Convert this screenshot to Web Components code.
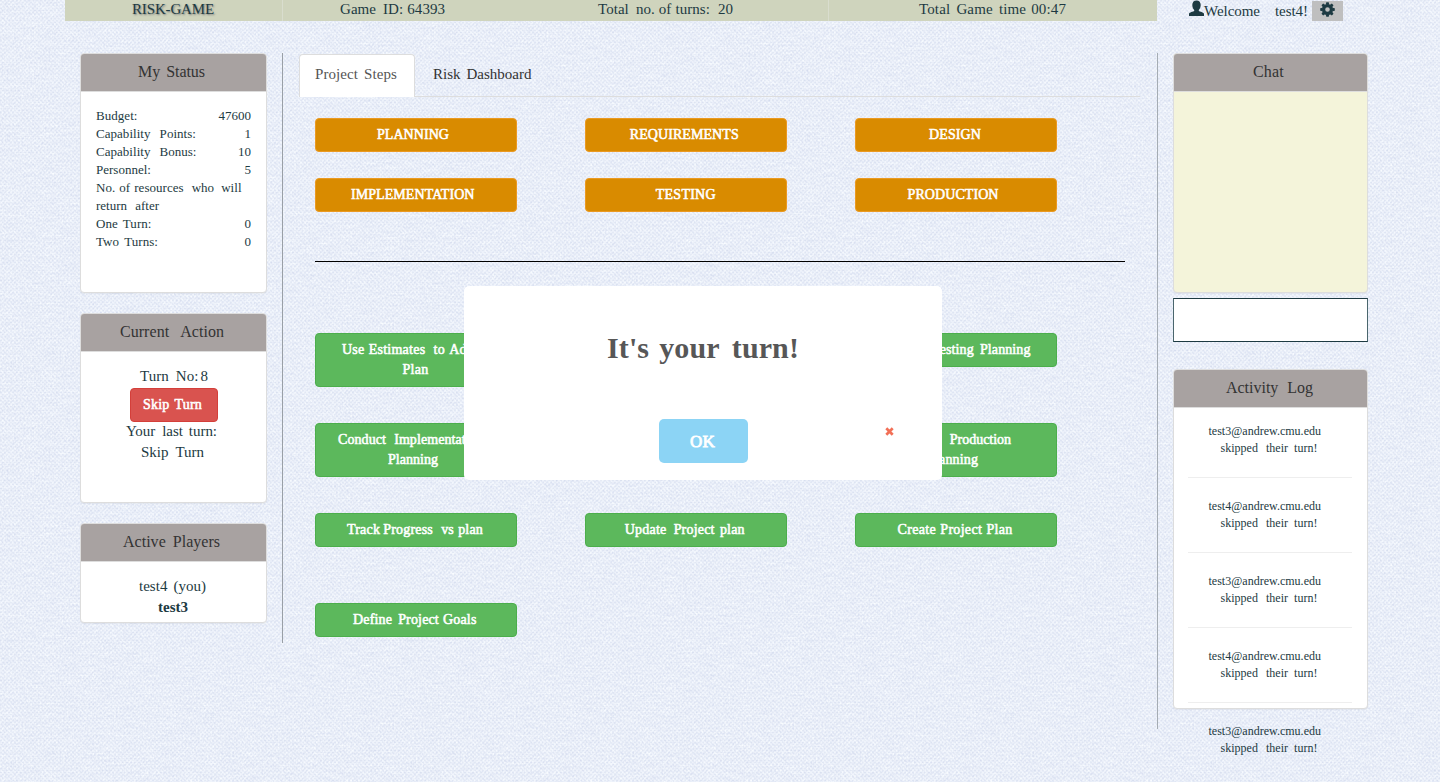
<!DOCTYPE html>
<html lang="en"><head><meta charset="utf-8"><title>Risk-Game</title>
<style>
body{margin:0;font-family:"Liberation Serif",serif;color:#1d3a42;height:782px;overflow:hidden;
background:#e8edf8 url("data:image/svg+xml,%3Csvg xmlns='http://www.w3.org/2000/svg' width='400' height='400'%3E%3Cfilter id='a' x='0' y='0' width='1' height='1' color-interpolation-filters='sRGB'%3E%3CfeTurbulence type='fractalNoise' baseFrequency='.05 .6' numOctaves='2' seed='4' stitchTiles='stitch'/%3E%3CfeColorMatrix values='.17 0 0 0 .83 .15 0 0 0 .86 .08 0 0 0 .935 0 0 0 0 1'/%3E%3C/filter%3E%3Cfilter id='b' x='0' y='0' width='1' height='1' color-interpolation-filters='sRGB'%3E%3CfeTurbulence type='fractalNoise' baseFrequency='.55 .4' numOctaves='2' seed='9' stitchTiles='stitch'/%3E%3CfeColorMatrix values='.22 0 0 0 .805 .2 0 0 0 .835 .1 0 0 0 .925 0 0 0 0 .6'/%3E%3C/filter%3E%3Cpattern id='p' width='4' height='4' patternUnits='userSpaceOnUse'%3E%3Cpath d='M0 0h2v1H0zM2 2h2v1H2z' fill='%23c4cee3' opacity='.22'/%3E%3Cpath d='M2 0h2v1H2zM0 2h2v1H0z' fill='%23fff' opacity='.25'/%3E%3C/pattern%3E%3Crect width='400' height='400' filter='url(%23a)'/%3E%3Crect width='400' height='400' filter='url(%23b)'/%3E%3Crect width='400' height='400' fill='url(%23p)'/%3E%3C/svg%3E")}
</style></head><body>
<risk-game></risk-game>
<script>
const define=(name,markup,setup)=>customElements.define(name,class extends HTMLElement{
 connectedCallback(){ if(this.shadowRoot)return; const r=this.attachShadow({mode:'open'});
  r.innerHTML=typeof markup==='function'?markup(this):markup; if(setup)setup(this,r);}
});
const attr=(e,n,d='')=>e.getAttribute(n)??d;

/* A line of words: x = indent, g = gap after each word, w = overall width */
define('word-run',e=>{
 const words=attr(e,'t').split(' '),g=attr(e,'g').split(' ');
 return `<style>:host{display:block;white-space:pre;text-align:left;margin-left:${attr(e,'x',0)}px}</style><span id="r">`+
  words.map((w,i)=>w+(i<words.length-1?`<span style="word-spacing:calc(${g[i]||4}px - .25em)"> </span>`:'')).join('')+'</span>';
},(e,r)=>{const w=+attr(e,'w',0);if(w){const s=r.getElementById('r');s.style.letterSpacing=((w-s.getBoundingClientRect().width)/attr(e,'t').length).toFixed(3)+'px';}});

define('game-panel',e=>`<style>
:host{display:flex;flex-direction:column;box-sizing:border-box;border:1px solid #ddd;border-radius:4px;background:var(--body,#fff);box-shadow:0 1px 1px rgba(0,0,0,.05)}
header{flex:none;height:36.5px;line-height:36px;font-size:16px;color:#333;background:#a8a2a1;border-bottom:1px solid #ddd;border-radius:3px 3px 0 0}
main{padding:15px}</style>
<header><word-run t="${attr(e,'t')}" x="${attr(e,'x')}" w="${attr(e,'w')}" g="${attr(e,'g')}"></word-run></header><main><slot></slot></main>`);

define('game-button',`<style>
:host{display:block;box-sizing:border-box;border:1px solid var(--bd,#4cae4c);background:var(--bg,#5cb85c);border-radius:4px;color:#fff;font-size:14px;line-height:20px;padding:6px 0;-webkit-text-stroke:.55px #fff}</style><slot></slot>`);

define('status-row',e=>`<style>:host{display:flex;justify-content:space-between;height:18px;line-height:18px;font-size:13px}</style>
<word-run t="${attr(e,'t')}" w="${attr(e,'w')}" g="${attr(e,'g')}"></word-run><span>${attr(e,'v')}</span>`);

define('top-bar',`<style>
:host{display:grid;grid-template-columns:218px 273px 273px 328px auto;grid-template-rows:21px;height:21px;font-size:15px;line-height:19px}
div{background:#cfd4bd;box-sizing:border-box}
.s{border-right:1px solid #d9ddce}
.u{background:none;display:flex;padding-left:32px}
svg{display:block;flex:none}.gear{margin:1px 0 0 4px;width:31px;height:20px;background:#bfbfbf;display:flex;justify-content:center}
.gear svg{margin-top:1px}.u word-run{line-height:22px}</style>
<div class="s" style="text-shadow:1px 1px 2px #777"><word-run t="RISK-GAME" x="67" w="82"></word-run></div>
<div><word-run t="Game ID: 64393" x="57" w="105" g="7 4"></word-run></div>
<div class="s" style="padding-left:42px"><word-run t="Total no. of turns: 20" w="135" g="7 4 4 8"></word-run></div>
<div><word-run t="Total Game time 00:47" x="90" w="147" g="6 6 5"></word-run></div>
<div class="u"><svg width="15" height="16" viewBox="0 0 15 16"><path fill="#1d3a42" d="M7.5.5C4.600.5 3.300 2.300 3.300 5c0 2.200.8 3.900 1.900 4.900v1.200C4.300 12 .2 12.200 0 13.800V16h15v-2.200c-.2-1.600-4.300-1.800-5.200-2.700V9.900C10.900 8.900 11.700 7.200 11.700 5c0-2.700-1.300-4.500-4.200-4.500Z"/></svg>
<word-run t="Welcome test4!" w="104" g="15"></word-run>
<div class="gear"><svg width="15" height="15" viewBox="-7.500 -7.500 15 15" fill="#1d3a42"><circle r="3.900" fill="none" stroke="#1d3a42" stroke-width="3.200"/><g id="g"></g></svg></div></div>`,
(e,r)=>{r.getElementById('g').innerHTML=[0,45,90,135,180,225,270,315].map(a=>`<path transform="rotate(${a})" d="M-1.700-4.800-1.200-7.300H1.200L1.700-4.800Z"/>`).join('')});

define('left-column',`<style>
:host{display:flex;flex-direction:column;gap:20px;box-sizing:border-box;width:218px;height:590px;padding:0 15px;border-right:1px solid #999fa6;font-size:15px;line-height:21px}
.b{margin-top:-1px}
game-button{--bg:#d9534f;--bd:#d43f3a;width:88px;margin:1px 0 -1px 34px;height:34px}</style>
<game-panel style="height:240px" t="My Status" x="57" w="67" g="6">
<status-row t="Budget:" w="41.500" v="47600"></status-row>
<status-row t="Capability Points:" w="100" g="9" v="1"></status-row>
<status-row t="Capability Bonus:" w="100.500" g="9" v="10"></status-row>
<status-row t="Personnel:" w="55" v="5"></status-row>
<status-row t="No. of resources who will" w="145.500" g="4 4 8 7"></status-row>
<status-row t="return after" w="63" g="8"></status-row>
<status-row t="One Turn:" w="55.500" g="5" v="0"></status-row>
<status-row t="Two Turns:" w="62" g="5" v="0"></status-row></game-panel>
<game-panel style="height:190px" t="Current Action" x="39" w="104" g="11">
<div class="b"><word-run t="Turn No: 8" x="44" w="68" g="7 2"></word-run>
<game-button><word-run t="Skip Turn" x="12" w="59" g="5"></word-run></game-button>
<word-run t="Your last turn:" x="30" w="91" g="7 6"></word-run>
<word-run t="Skip Turn" x="45" w="63" g="7"></word-run></div></game-panel>
<game-panel style="height:100px" t="Active Players" x="42" w="97" g="7">
<div class="b"><word-run t="test4 (you)" x="43" w="67" g="6"></word-run>
<word-run style="font-weight:bold" t="test3" x="62" w="30"></word-run></div></game-panel>`);

const W=(t,x,w,g='')=>`<word-run t="${t}" x="${x}" w="${w}" g="${g}"></word-run>`;
const B=(...l)=>`<game-button>${l.join('')}</game-button>`;
define('step-board',`<style>
:host{display:block;box-sizing:border-box;width:875px;height:676px;padding:1px 17px 0 16px;border-right:1px solid #a5acb3}
nav{display:flex;height:43px;box-sizing:border-box;border-bottom:1px solid #ddd;font-size:15px;line-height:39px;color:#333}
nav div{box-sizing:border-box;width:116px;height:43px;border:1px solid #ddd;border-bottom:0;border-radius:4px 4px 0 0;background:#fff;color:#555}
nav>word-run{line-height:41px}
section{display:grid;grid-template-columns:repeat(3,202.4px);column-gap:67.4px;align-items:start;margin-left:16px}
.p{margin-top:21px;grid-auto-rows:60px;--bg:#d98b00;--bd:#eb9a22}.d{grid-auto-rows:90px}
hr{border:0;height:1px;background:#000;margin:23px 15px 71px 16px}</style>
<nav><div>${W('Project Steps',15,82,'6')}</div>${W('Risk Dashboard',18,98.5,'6')}</nav>
<section class="p">${B(W('PLANNING',61,72))}${B(W('REQUIREMENTS',44,109))}${B(W('DESIGN',73.5,52))}
${B(W('IMPLEMENTATION',35,123.5))}${B(W('TESTING',70,60))}${B(W('PRODUCTION',52,91))}</section><hr>
<section class="d">${B(W('Use Estimates to Adjust',26,146,'4 8 4'),W('Plan',86.5,26))}<i></i>${B(W('Conduct Testing Planning',22,153,'6 6'))}
${B(W('Conduct Implementation',22,146,'8'),W('Planning',72,50))}<i></i>${B(W('Conduct Production',38,117.5,'9'),W('Planning',71.5,51))}
${B(W('Track Progress vs plan',31,136,'3 8 4'))}${B(W('Update Project plan',39,120,'7 5'))}${B(W('Create Project Plan',42,115,'4 4'))}
${B(W('Define Project Goals',37,123.5,'6 4'))}</section>`);

define('right-column',`<style>
:host{display:flex;flex-direction:column;width:195px;margin-left:15px;font-size:12px;line-height:17px}
.in{box-sizing:border-box;height:44px;border:1px solid #1d3a42;border-left-color:#4a666d;border-right-color:#4a666d;background:#fff;margin:5px 0 27px}
hr{border:0;height:1px;background:#eee;margin:20px 0 20px -1px;width:164px}</style>
<game-panel style="height:240px;--body:#f4f4da" t="Chat" x="79" w="31"></game-panel><div class="in"></div>
<game-panel style="height:340px" t="Activity Log" x="52" w="87" g="9">
${[3,4,3,4,3].map(n=>W(`test${n}@andrew.cmu.edu`,19.5,112.5)+W('skipped their turn!',31.5,97,'8 6')).join('<hr>')}</game-panel>`);

define('turn-dialog',`<style>
:host{position:absolute;left:464px;top:286px;width:478px;height:194px;background:#fff;border-radius:5px;box-sizing:border-box;padding-top:42px}
h2{margin:0;font-size:30px;line-height:40px;color:#575757}
footer{display:flex;margin:51px 0 0 195px}
b{display:block;box-sizing:border-box;width:89px;height:44px;border-radius:5px;background:#8cd4f5;color:#fff;font:17px/45px "Liberation Serif",serif;-webkit-text-stroke:.8px #fff}
svg{margin:8px 0 0 137px}</style><h2>${W("It's your turn!",143,192,'10 12')}</h2>
<footer><b>${W('OK',31,25)}</b><svg width="9" height="9" viewBox="0 0 9 9"><path d="M1.300 1.300 7.700 7.700M7.700 1.300 1.300 7.700" stroke="#f27057" stroke-width="2.700"/></svg></footer>`);

define('risk-game',`<style>:host{display:block;padding-left:65px}.cols{display:flex;align-items:flex-start;margin-top:32px}</style>
<top-bar></top-bar><div class="cols"><left-column></left-column><step-board></step-board><right-column></right-column></div><turn-dialog></turn-dialog>`);
</script></body></html>
